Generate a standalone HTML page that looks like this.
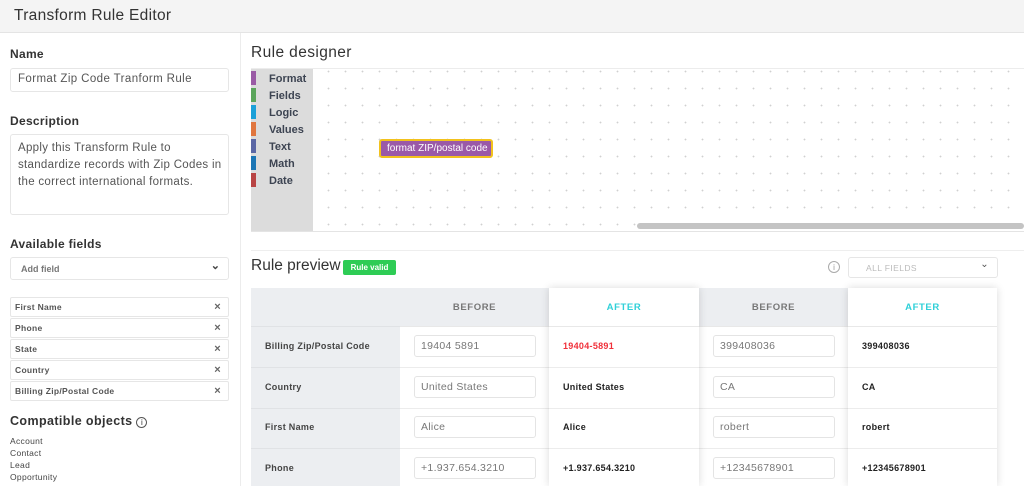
<!DOCTYPE html>
<html><head><meta charset="utf-8"><style>
*{box-sizing:border-box;margin:0;padding:0}
html,body{width:1024px;height:486px;overflow:hidden}
body{background:#fff;font-family:"Liberation Sans",sans-serif;color:#333;position:relative}
.a{position:absolute}
.hdr{left:0;top:0;width:1024px;height:33px;background:#f4f4f4;border-bottom:1px solid #e4e4e4}
.hdr span{position:absolute;left:14px;top:7px;font-size:15.5px;color:#333;letter-spacing:.3px}
.lbl{font-size:12px;font-weight:bold;color:#333;left:10px;letter-spacing:.3px}
.inp{border:1px solid #e6e6e6;border-radius:3px;background:#fff;font-size:11.5px;color:#555;white-space:nowrap}
.fld{left:10px;width:219px;height:20px;border:1px solid #e6e6e6;border-radius:2px;font-size:8.5px;font-weight:bold;color:#555;padding:4px 0 0 4px;letter-spacing:.3px}
.fld b{position:absolute;right:7px;top:3px;font-size:11px;color:#666}
.obj{left:10px;font-size:8.5px;color:#444;letter-spacing:.3px}
.bar{left:251px;width:5px;height:14px}
.tb{left:269px;font-size:11px;font-weight:bold;color:#3d4452}
.col{top:288px;height:198px;width:149px}
.th{position:absolute;top:0;left:0;right:0;height:39px;font-size:9.5px;font-weight:bold;text-align:center;padding-top:14px;letter-spacing:.6px;border-bottom:1px solid #e8e8e8}
.cell{position:absolute;left:0;right:0;height:41px;border-bottom:1px solid #ececec;font-size:9px;font-weight:bold;letter-spacing:.3px}
.ci{position:absolute;left:14px;top:8px;width:122px;height:22px;border:1px solid #e4e4e4;border-radius:3px;font-size:10.5px;color:#777;padding:4px 0 0 6px;font-weight:normal}
.ct{position:absolute;left:14px;top:14px;color:#222}
</style></head><body>
<div class="a hdr"><span>Transform Rule Editor</span></div>
<div class="a" style="left:240px;top:33px;width:1px;height:453px;background:#ececec"></div>

<div class="a lbl" style="top:47px">Name</div>
<div class="a inp" style="left:10px;top:68px;width:219px;height:24px;padding:4px 0 0 7px;letter-spacing:.4px">Format Zip Code Tranform Rule</div>
<div class="a lbl" style="top:114px">Description</div>
<div class="a inp" style="left:10px;top:134px;width:219px;height:81px;padding:5px 0 0 7px;line-height:17px;letter-spacing:.3px">Apply this Transform Rule to<br>standardize records with Zip Codes in<br>the correct international formats.</div>
<div class="a lbl" style="top:237px">Available fields</div>
<div class="a inp" style="left:10px;top:257px;width:219px;height:23px;font-size:9px;font-weight:bold;color:#777;padding:6px 0 0 10px">Add field<span style="position:absolute;right:8px;top:1px;font-size:11px;color:#444">&#8964;</span></div>
<div class="a fld" style="top:297px">First Name<b>×</b></div>
<div class="a fld" style="top:318px">Phone<b>×</b></div>
<div class="a fld" style="top:339px">State<b>×</b></div>
<div class="a fld" style="top:360px">Country<b>×</b></div>
<div class="a fld" style="top:381px">Billing Zip/Postal Code<b>×</b></div>
<div class="a" style="left:10px;top:414px;font-size:12.5px;font-weight:bold;color:#333;letter-spacing:.4px">Compatible objects <span style="font-weight:normal;display:inline-block;width:11px;height:11px;border:1px solid #555;border-radius:50%;font-size:8px;text-align:center;line-height:10px;letter-spacing:0">i</span></div>
<div class="a obj" style="top:436px">Account</div>
<div class="a obj" style="top:448px">Contact</div>
<div class="a obj" style="top:460px">Lead</div>
<div class="a obj" style="top:472px">Opportunity</div>

<div class="a" style="left:251px;top:44px;font-size:15.5px;color:#333;letter-spacing:.4px">Rule designer</div>
<div class="a" style="left:251px;top:68px;width:773px;height:1px;background:#ececec"></div>
<div class="a" style="left:251px;top:69px;width:62px;height:162px;background:#dcdcdc"></div>
<div class="a" style="left:313px;top:69px;width:711px;height:162px;background-color:#fff;background-image:radial-gradient(circle,#d0d0d0 0.7px,transparent 1.1px);background-size:17px 17px;background-position:7px -6px"></div>
<div class="a bar" style="top:71px;background:#9a5ba5"></div><div class="a tb" style="top:73px">Format</div>
<div class="a bar" style="top:88px;background:#5ba55b"></div><div class="a tb" style="top:90px">Fields</div>
<div class="a bar" style="top:105px;background:#1ba0d8"></div><div class="a tb" style="top:107px">Logic</div>
<div class="a bar" style="top:122px;background:#e0763f"></div><div class="a tb" style="top:124px">Values</div>
<div class="a bar" style="top:139px;background:#5b67a5"></div><div class="a tb" style="top:141px">Text</div>
<div class="a bar" style="top:156px;background:#1c76b5"></div><div class="a tb" style="top:158px">Math</div>
<div class="a bar" style="top:173px;background:#b84444"></div><div class="a tb" style="top:175px">Date</div>
<div class="a" style="left:379px;top:139px;width:114px;height:19px;background:#9a59a8;border:2px solid #f2c21d;border-radius:3px;color:#fff;font-size:10px;padding:2px 0 0 6px">format ZIP/postal code</div>
<div class="a" style="left:637px;top:223px;width:387px;height:6px;background:#c4c4c4;border-radius:3px"></div>
<div class="a" style="left:251px;top:231px;width:773px;height:1px;background:#e4e4e4"></div>
<div class="a" style="left:251px;top:250px;width:773px;height:1px;background:#eeeeee"></div>

<div class="a" style="left:251px;top:257px;font-size:15.5px;color:#333;letter-spacing:0">Rule preview</div>
<div class="a" style="left:343px;top:260px;width:53px;height:15px;background:#2ecc55;border-radius:2px;color:#fff;font-size:8px;font-weight:bold;text-align:center;line-height:15px">Rule valid</div>
<div class="a" style="left:828px;top:261px;width:12px;height:12px;border:1px solid #aaa;border-radius:50%;font-size:8px;color:#999;text-align:center;line-height:11px">i</div>
<div class="a inp" style="left:848px;top:257px;width:150px;height:21px;font-size:8.5px;color:#bbb;padding:5px 0 0 17px;letter-spacing:.4px">ALL FIELDS<span style="position:absolute;right:8px;top:1px;font-size:10px;color:#555">&#8964;</span></div>

<div class="a col" style="left:251px;background:#eceef1">
 <div class="th" style="border-color:#e0e2e5"></div>
 <div class="cell" style="top:39px;border-color:#e0e2e5"><span class="ct" style="color:#444">Billing Zip/Postal Code</span></div>
 <div class="cell" style="top:80px;border-color:#e0e2e5"><span class="ct" style="color:#444">Country</span></div>
 <div class="cell" style="top:120px;border-color:#e0e2e5"><span class="ct" style="color:#444">First Name</span></div>
 <div class="cell" style="top:161px;border-color:#e0e2e5"><span class="ct" style="color:#444">Phone</span></div>
</div>
<div class="a col" style="left:400px;background:#fff">
 <div class="th" style="background:#eceef1;color:#777">BEFORE</div>
 <div class="cell" style="top:39px"><div class="ci">19404 5891</div></div>
 <div class="cell" style="top:80px"><div class="ci">United States</div></div>
 <div class="cell" style="top:120px"><div class="ci">Alice</div></div>
 <div class="cell" style="top:161px"><div class="ci">+1.937.654.3210</div></div>
</div>
<div class="a col" style="left:549px;width:150px;background:#fff;box-shadow:0 0 8px rgba(0,0,0,.15);z-index:2">
 <div class="th" style="color:#2fd0d8">AFTER</div>
 <div class="cell" style="top:39px"><span class="ct" style="color:#f0303a">19404-5891</span></div>
 <div class="cell" style="top:80px"><span class="ct">United States</span></div>
 <div class="cell" style="top:120px"><span class="ct">Alice</span></div>
 <div class="cell" style="top:161px"><span class="ct">+1.937.654.3210</span></div>
</div>
<div class="a col" style="left:699px;background:#fff">
 <div class="th" style="background:#eceef1;color:#777">BEFORE</div>
 <div class="cell" style="top:39px"><div class="ci">399408036</div></div>
 <div class="cell" style="top:80px"><div class="ci">CA</div></div>
 <div class="cell" style="top:120px"><div class="ci">robert</div></div>
 <div class="cell" style="top:161px"><div class="ci">+12345678901</div></div>
</div>
<div class="a col" style="left:848px;background:#fff;box-shadow:0 0 8px rgba(0,0,0,.15);z-index:2">
 <div class="th" style="color:#2fd0d8">AFTER</div>
 <div class="cell" style="top:39px"><span class="ct">399408036</span></div>
 <div class="cell" style="top:80px"><span class="ct">CA</span></div>
 <div class="cell" style="top:120px"><span class="ct">robert</span></div>
 <div class="cell" style="top:161px"><span class="ct">+12345678901</span></div>
</div>
</body></html>
